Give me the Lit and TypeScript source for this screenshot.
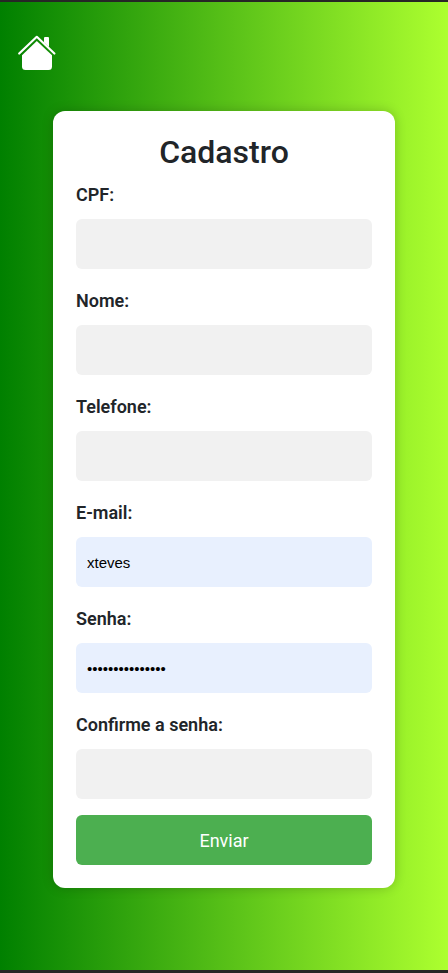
import { LitElement, html, css } from "lit";
import { customElement } from "lit/decorators.js";
import { classMap } from "lit/directives/class-map.js";

interface Field {
  id: string;
  label: string;
  type: string;
  value: string;
}

const FIELDS: Field[] = [
  { id: "cpf", label: "CPF:", type: "text", value: "" },
  { id: "nome", label: "Nome:", type: "text", value: "" },
  { id: "telefone", label: "Telefone:", type: "tel", value: "" },
  { id: "email", label: "E-mail:", type: "text", value: "xteves" },
  { id: "senha", label: "Senha:", type: "password", value: "xteves123456789" },
  { id: "confirma", label: "Confirme a senha:", type: "password", value: "" },
];

@customElement("app-root")
export class AppRoot extends LitElement {
  static styles = css`
    :host {
      display: block;
      font-family: Roboto, "Liberation Sans", sans-serif;
      color: #212529;
    }
    .page {
      box-sizing: border-box;
      min-height: 100vh;
      border-top: 2px solid #262626;
      border-bottom: 3px solid #262626;
      background: linear-gradient(to right, green, greenyellow);
    }
    .top {
      padding: 32px 16px 0;
    }
    .home {
      display: block;
      width: 42px;
      height: 42px;
    }
    .home svg {
      display: block;
    }
    .card {
      box-sizing: border-box;
      max-width: 400px;
      width: calc(100% - 106px);
      margin: 35px auto 0;
      padding: 23px;
      border-radius: 12px;
      background: #fff;
      box-shadow: 0 0 12px rgba(0, 0, 0, 0.2);
    }
    h1 {
      margin: 0 0 8px;
      font-size: 32px;
      line-height: 37px;
      font-weight: 500;
      text-align: center;
    }
    label {
      display: block;
      margin-bottom: 8px;
      font-size: 18px;
      line-height: 32px;
      font-weight: 600;
    }
    input {
      box-sizing: border-box;
      display: block;
      width: 100%;
      height: 50px;
      margin: 0 0 16px;
      padding: 2px 11px;
      border: 0;
      border-radius: 6px;
      background: #f1f1f1;
      color: #000;
      font: 15px "Liberation Sans", Arial, sans-serif;
    }
    .filled {
      background: #e8f0fe;
    }
    button {
      display: block;
      width: 100%;
      height: 50px;
      padding: 0;
      border: 0;
      border-radius: 6px;
      background: #4caf50;
      color: #fff;
      font: 18px Roboto, "Liberation Sans", sans-serif;
      cursor: pointer;
    }
  `;

  render() {
    return html`
      <main class="page">
        <nav class="top">
          <a class="home" href="#" aria-label="Início">
            <svg width="42" height="42" viewBox="0 0 42 42" fill="#fff">
              <path d="M28 4Q28 3 29 3H32Q33 3 33 4V13L28 8.500Z" />
              <path
                d="M3.200 19.500L20.800 2.800L38.400 19.500"
                fill="none"
                stroke="#fff"
                stroke-width="2.200"
                stroke-linecap="round"
                stroke-linejoin="round"
              />
              <path d="M20.800 6.900L36 21.300V32.500Q36 36 32.500 36H9.500Q6 36 6 32.500V21.300Z" />
            </svg>
          </a>
        </nav>
        <form class="card" @submit=${(e: Event) => e.preventDefault()}>
          <h1>Cadastro</h1>
          ${FIELDS.map(
            (f) => html`
              <label for=${f.id}>${f.label}</label>
              <input
                id=${f.id}
                type=${f.type}
                .value=${f.value}
                class=${classMap({ filled: f.value !== "" })}
              />
            `
          )}
          <button type="submit">Enviar</button>
        </form>
      </main>
    `;
  }
}
